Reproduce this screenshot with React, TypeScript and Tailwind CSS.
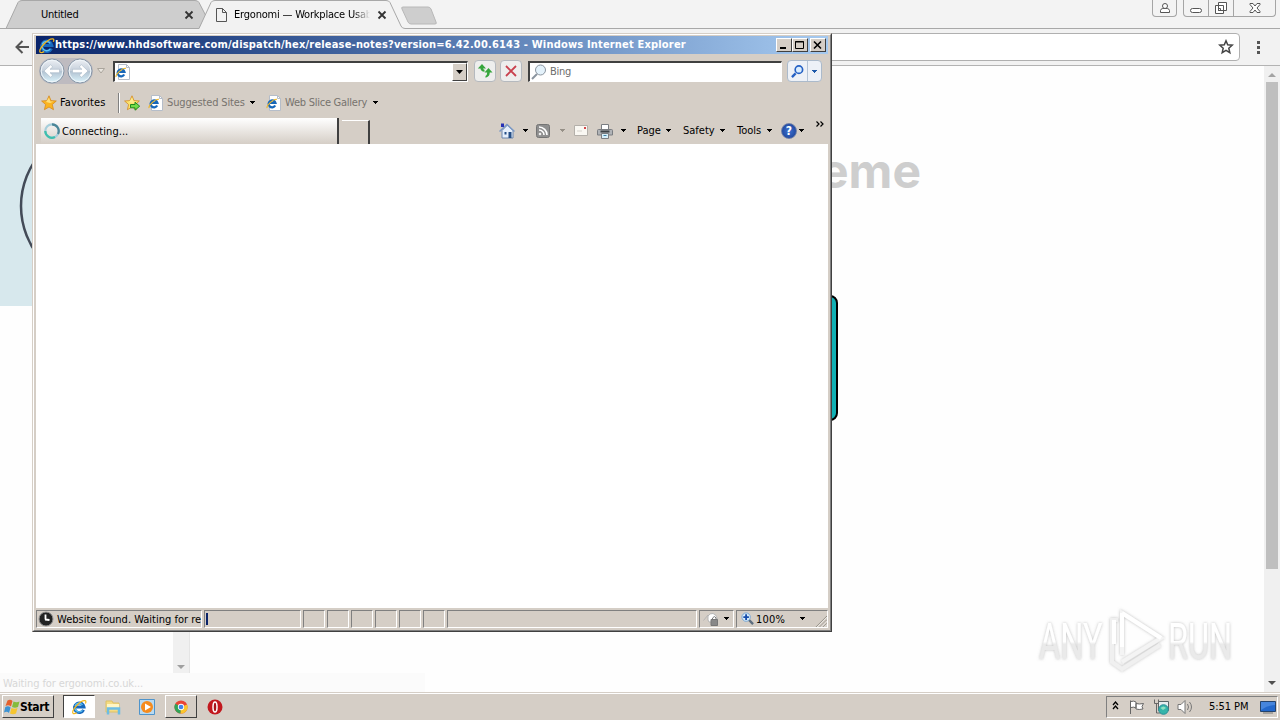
import React from "react";

const Caret = ({ className = "" }: { className?: string }) => (
  <svg viewBox="0 0 5 3" className={`h-[3px] w-[5px] shrink-0 ${className}`} shapeRendering="crispEdges">
    <path d="M0 0h5v1H0zM1 1h3v1H1zM2 2h1v1H2z" fill="currentColor" />
  </svg>
);

const IeLogo = ({ className = "" }: { className?: string }) => (
  <svg viewBox="0 0 16 16" className={`shrink-0 ${className}`} fill="none">
    <path d="M12.6 10.8A4.800 4.800 0 1 1 13 8H5" stroke="#1769bd" strokeWidth="3" />
    <path d="M11.500 11.400A4.300 4.300 0 0 1 4 9.500M4 7a4.200 4.200 0 0 1 7.500-1" stroke="#5cc3f4" strokeWidth="1.300" />
    <path d="M2 14.400C.200 11.500 9 1.200 14 1.700c1.300.2 1 1.600.4 2.800M2 14.400c1 .6 2.700 0 3.800-.6" stroke="#f4b91d" strokeWidth="1.200" />
  </svg>
);

const PageIcon = () => (
  <svg viewBox="0 0 15 16" className="h-4 w-[15px] shrink-0" fill="none">
    <path d="M3.500.5h8l3 3v12h-11z" fill="#fff" stroke="#b5bdc9" />
    <path d="M11.500.5v3h3" stroke="#b5bdc9" />
    <path d="M9.200 10.500A3.500 3.500 0 1 1 9.500 8H4" stroke="#1767b9" strokeWidth="2.200" />
    <path d="M1.200 13C0 11.500 6.500 3.800 11 4.300" stroke="#edb628" strokeWidth="1.200" />
  </svg>
);

const Star = ({ add = false }: { add?: boolean }) => (
  <svg viewBox="0 0 16 16" className="h-4 w-4 shrink-0">
    <path
      d="M8 .8l2 4.800 5.300.4-4 3.500 1.200 5.200L8 12l-4.600 2.700 1.200-5.200-4-3.500 5.300-.4z"
      fill={add ? "#fbe36c" : "#fbb41f"}
      stroke="#d58a22"
      strokeWidth=".8"
    />
    <path d="M8 2.500l1.300 4h3.500L9 8 5 7z" fill="#fff0a0" opacity=".7" />
    {add && <path d="M6.500 9.500h4.500V7.200l4.700 4-4.700 4v-2.400H6.500z" fill="#72dc48" stroke="#218a20" />}
  </svg>
);

const NavButton = ({ forward = false }: { forward?: boolean }) => (
  <svg viewBox="0 0 26 26" className="h-[26px] w-[26px] shrink-0">
    <defs>
      <linearGradient id="nav" x2="0" y2="1">
        <stop stopColor="#edf0f5" />
        <stop offset=".48" stopColor="#c6d0db" />
        <stop offset=".52" stopColor="#b3c3d2" />
        <stop offset="1" stopColor="#dcf5fd" />
      </linearGradient>
    </defs>
    <circle cx="13" cy="13" r="12" fill="url(#nav)" stroke="#8997a7" />
    <circle cx="13" cy="13" r="10.800" fill="none" stroke="#f0f6fa" />
    <g transform={forward ? "matrix(-1 0 0 1 26 0)" : undefined}>
      <path d="M5 13l6.500-6.200 2.300 2L11 11.300h9.500v3.400H11l2.800 2.500-2.300 2z" fill="#fff" stroke="#9fb0c0" strokeWidth=".5" />
    </g>
  </svg>
);

const ChromeWindowIcons = () => (
  <div className="flex h-[17px] w-[124px] shrink-0 items-start">
    <div className="mr-[6px] flex h-[17px] w-[25px] items-center justify-center rounded-b border border-t-0 border-[#a5a5a5]">
      <svg viewBox="0 0 12 12" className="mb-px h-3 w-3" fill="#fff" stroke="#555">
        <path d="M1.500 10.500V8.500q0-1.500 2.200-2h4.600q2.200.500 2.200 2v2z" />
        <circle cx="6" cy="4" r="2.500" />
      </svg>
    </div>
    <div className="flex h-[17px] w-[93px] rounded-b border border-t-0 border-[#a5a5a5]">
      <div className="flex w-[25px] items-center justify-center border-r border-[#a5a5a5]">
        <div className="mt-[5px] h-[5px] w-3 rounded-sm border border-[#555] bg-white" />
      </div>
      <div className="flex w-[25px] items-center justify-center border-r border-[#a5a5a5]">
        <svg viewBox="0 0 14 14" className="h-[14px] w-[14px]" fill="#fff" stroke="#555">
          <path d="M4.500 1.500h8v8h-8zM1.500 4.500h8v8h-8zM4.500 7.500h2v2h-2z" />
        </svg>
      </div>
      <div className="flex flex-1 items-center justify-center">
        <svg viewBox="0 0 12 12" className="mb-px h-3 w-3" fill="#fff" stroke="#555">
          <path d="M1 1.500h3L6 4l2-2.500h3v1L8 6l3 3.500v1H8L6 8l-2 2.500H1v-1L4 6 1 2.500z" />
        </svg>
      </div>
    </div>
  </div>
);

const BrowserTabs = () => (
  <div className="relative flex h-[29px] shrink-0 bg-[#f3f3f3] text-[11px] text-black">
    <svg viewBox="0 0 1280 29" className="absolute inset-0 h-[29px] w-full" fill="none">
      <path d="M6 28.500L18 2.500Q19 .5 22 .5H195Q198 .5 199 2.500L206 16 199 28.500z" fill="#cecece" stroke="#a8a8a8" />
      <path d="M0 28.500H199L211 2.500Q212 .5 215 .5H386Q389 .5 390 2.500L401 26q1 2.500 4 2.500H1280" fill="#f2f2f2" stroke="#a8a8a8" />
      <path d="M403 7h25q2 0 3 2l5 13q1 2-1 2h-24q-2 0-3-2l-6-13q-1-2 1-2z" fill="#cecece" stroke="#b8b8b8" />
    </svg>
    <div className="relative flex w-full items-center">
      <span className="ml-[41px] w-[143px] pt-px whitespace-nowrap tracking-[-0.200px]">Untitled</span>
      <svg viewBox="0 0 10 10" className="h-[10px] w-[10px]" stroke="#333" strokeWidth="1.800">
        <path d="M1.500 1.500l7 7M8.500 1.500l-7 7" />
      </svg>
      <svg viewBox="0 0 11 14" className="ml-[22px] h-[14px] w-[11px]" fill="none" stroke="#555">
        <path d="M.5.500h6l4 4v9H.500zM6.500.500v4h4" />
      </svg>
      <span className="ml-[7px] w-[136px] pt-px whitespace-nowrap tracking-[-0.200px] [mask-image:linear-gradient(to_right,black_88%,transparent)]">
        Ergonomi — Workplace Usab
      </span>
      <svg viewBox="0 0 10 10" className="ml-[7px] h-[10px] w-[10px]" stroke="#333" strokeWidth="1.800">
        <path d="M1.500 1.500l7 7M8.500 1.500l-7 7" />
      </svg>
      <div className="ml-auto self-start pr-[4px]">
        <ChromeWindowIcons />
      </div>
    </div>
  </div>
);

const BrowserToolbar = () => (
  <div className="flex h-[37px] shrink-0 items-center border-b border-[#b3b3b3] bg-[#f2f2f2]">
    <svg viewBox="0 0 14 14" className="ml-[15px] h-[14px] w-[14px]" fill="none" stroke="#555" strokeWidth="2">
      <path d="M14 7H2M7.500 1L1.500 7l6 6" />
    </svg>
    <div className="ml-[11px] flex h-[28px] w-[1200px] items-center justify-end rounded-sm border border-[#b0b0b0] bg-white pr-[5px]">
      <svg viewBox="0 0 16 16" className="h-4 w-4" fill="none" stroke="#444" strokeWidth="1.500">
        <path d="M8 1.800l1.700 4 4.500.400-3.400 3 1 4.400L8 11.300l-3.800 2.300 1-4.400-3.400-3 4.500-.4z" />
      </svg>
    </div>
    <svg viewBox="0 0 3 13" className="ml-[17px] h-[13px] w-[3px]" fill="#555">
      <path d="M0 0h3v3H0zM0 5h3v3H0zM0 10h3v3H0z" />
    </svg>
  </div>
);

const AnyRunMark = () => (
  <svg viewBox="0 0 220 70" className="absolute right-[32px] bottom-[16px] h-[70px] w-[220px]">
    <defs>
      <linearGradient id="mark" x2="0" y2="1">
        <stop offset=".5" stopColor="#fff" />
        <stop offset=".54" stopColor="#eaeaea" />
      </linearGradient>
      <filter id="soft" x="-10%" y="-20%" width="120%" height="140%">
        <feDropShadow dx="0" dy="0" stdDeviation="1.600" floodColor="#888" floodOpacity=".55" />
      </filter>
    </defs>
    <g filter="url(#soft)" fill="url(#mark)" fontFamily="Roboto, sans-serif" fontSize="50" fontWeight="400">
      <text transform="translate(11 53) scale(.65 1)">ANY</text>
      <text transform="translate(140 53) scale(.65 1)">RUN</text>
      <g fill="none" strokeWidth="4">
        <path d="M94 49V7l39 25-39 24" stroke="#f4f4f4" />
        <path d="M94 7l39 25M94 7v34" stroke="#fff" />
        <path d="M90 14h-6v42l10 7 38-24" stroke="#f0f0f0" />
        <path d="M86 14v24" stroke="#fff" />
      </g>
    </g>
  </svg>
);

const BrowserPage = () => (
  <div className="relative flex min-h-0 flex-1 overflow-hidden bg-[#fefefe]">
    <div className="mt-[40px] h-[200px] w-[200px] shrink-0 overflow-hidden bg-[#d7e8ed]">
      <svg viewBox="0 0 200 200" className="h-full w-full">
        <circle cx="101" cy="100" r="80" fill="none" stroke="#434b58" strokeWidth="2.500" />
      </svg>
    </div>
    <div className="flex flex-1 flex-col">
      <h1 className="mt-[76px] w-[721px] text-right font-['Inter',sans-serif] text-[48px] leading-[58px] font-bold text-[#cecece]">
        eme
      </h1>
      <div className="mt-[95px] ml-[538px] h-[126px] w-[100px] rounded-[8px] border-2 border-black bg-[#11b0b5]" />
    </div>
    <div className="flex w-4 shrink-0 flex-col items-center bg-[#f0f0f0]">
      <svg viewBox="0 0 8 4" className="mt-[7px] h-1 w-2" fill="#a3a3a3"><path d="M4 0l4 4H0z" /></svg>
      <div className="mt-[5px] h-[487px] w-[12px] bg-[#bfbfbf]" />
      <svg viewBox="0 0 8 4" className="mt-auto mb-[7px] h-1 w-2" fill="#505050"><path d="M4 4l4-4H0z" /></svg>
    </div>
    <div className="absolute bottom-[19px] left-[173px] flex h-[60px] w-[17px] items-end justify-center border-r border-[#e5e5e5] bg-[#f0f0f0] pb-1">
      <svg viewBox="0 0 8 4" className="h-1 w-2" fill="#a0a0a0"><path d="M4 4l4-4H0z" /></svg>
    </div>
    <div className="absolute bottom-0 left-0 flex h-[19px] w-[425px] items-center bg-[#fbfbfb] pt-[3px] pl-[3px] text-[11px] tracking-[-0.100px] text-[#d7d7d7]">
      Waiting for ergonomi.co.uk...
    </div>
    <AnyRunMark />
  </div>
);

const TitleButton = ({ className = "", children }: { className?: string; children: React.ReactNode }) => (
  <button
    className={`flex h-[14px] w-4 items-center justify-center border border-t-white border-r-[#404040] border-b-[#404040] border-l-white bg-[#d5cec6] ${className}`}
  >
    <svg viewBox="0 0 12 10" className="h-[10px] w-3 shrink-0" fill="none" stroke="#000">
      {children}
    </svg>
  </button>
);

const TitleBar = () => (
  <div className="flex h-[18px] shrink-0 items-center bg-linear-to-r from-[#0a246a] to-[#a6caf0] pr-[2px]">
    <IeLogo className="ml-[2px] h-[17px] w-[17px]" />
    <span className="w-[650px] whitespace-nowrap text-[11px] leading-[18px] font-bold tracking-[0.180px] text-white">
      https://www.hhdsoftware.com/dispatch/hex/release-notes?version=6.42.00.6143 - Windows Internet Explorer
    </span>
    <TitleButton className="ml-auto">
      <path d="M2 8h6" strokeWidth="2" />
    </TitleButton>
    <TitleButton>
      <path d="M1.500 1.500h8v7h-8zM1 2h9" />
    </TitleButton>
    <TitleButton className="ml-[2px]">
      <path d="M2 1.500l7 7M9 1.500l-7 7" strokeWidth="1.600" />
    </TitleButton>
  </div>
);

const AddressRow = () => (
  <div className="flex h-[34px] shrink-0 items-center">
    <div className="ml-[3px] flex w-[54px] gap-[2px] rounded-full bg-[#bebbc0]">
      <NavButton />
      <NavButton forward />
    </div>
    <svg viewBox="0 0 8 6" className="ml-1 h-[6px] w-2" fill="#e9e5df" stroke="#aaa59d"><path d="M.5.500h7L4 5z" /></svg>
    <div className="ml-[8px] flex h-[21px] w-[355px] items-center border-t-2 border-r border-b border-l-2 border-t-[#404040] border-r-white border-b-white border-l-[#404040] bg-white">
      <PageIcon />
      <div className="ml-auto flex h-[18px] w-[15px] items-center justify-center border border-t-white border-r-[#404040] border-b-[#404040] border-l-white bg-[#d5cec6]">
        <svg viewBox="0 0 7 4" className="h-1 w-[7px]"><path d="M0 0h7L3.500 4z" /></svg>
      </div>
    </div>
    <button className="ml-[6px] flex h-[22px] w-[22px] items-center justify-center rounded-sm border border-[#b5b9be] bg-[#eeeeed]">
      <svg viewBox="0 0 16 16" className="h-4 w-4 shrink-0" fill="#36a63c">
        <path d="M5 1L.8 5.500h2.700q.200 3 4 3.200v-2q-1.500-.2-1.500-1.200h3z" />
        <path d="M11.500 5L7.500 9.500h2.700q0 2.500-1.700 3.500v1.700q4-.7 4.300-5.200h2.700z" />
      </svg>
    </button>
    <button className="ml-[4px] flex h-[22px] w-[22px] items-center justify-center rounded-sm border border-[#b5b9be] bg-[#eeeeed]">
      <svg viewBox="0 0 12 12" className="h-3 w-3" stroke="#c9414e" strokeWidth="1.800">
        <path d="M1 1l10 10M11 1L1 11" />
      </svg>
    </button>
    <div className="ml-[6px] flex h-[21px] w-[254px] items-center border-t-2 border-r border-b border-l-2 border-t-[#404040] border-r-white border-b-white border-l-[#404040] bg-white text-[11px] text-[#6d6d6d]">
      <svg viewBox="0 0 16 16" className="mr-[3px] ml-px h-4 w-4" fill="none" stroke="#8a949f">
        <path d="M6 10L1 15" strokeWidth="2" />
        <circle cx="9.500" cy="6" r="5" fill="#e4f2fb" />
      </svg>
      <span className="pt-[2px] tracking-[-0.300px]">Bing</span>
    </div>
    <div className="ml-[5px] flex h-[22px] w-[35px] items-center rounded-sm border border-[#abbacb] bg-[#edf1f7]">
      <div className="flex h-full w-[20px] items-center justify-center border-r border-[#b5c4d6]">
        <svg viewBox="0 0 14 14" className="h-[13px] w-[13px]" fill="none" stroke="#2561c4">
          <path d="M5 9l-4 4" strokeWidth="2.500" />
          <circle cx="8.500" cy="5" r="4" strokeWidth="1.800" fill="#d9edff" />
        </svg>
      </div>
      <Caret className="ml-[4px] text-[#1f5aaa]" />
    </div>
  </div>
);

const FavoritesRow = () => (
  <div className="flex h-[29px] shrink-0 items-center text-[11px] text-[#77736e]">
    <span className="ml-[5px]"><Star /></span>
    <span className="ml-[3px] w-[52px] pt-[2px] whitespace-nowrap tracking-[0.100px] text-black">Favorites</span>
    <div className="ml-[6px] h-[20px] w-[2px] border-r border-l border-r-white border-l-[#808080]" />
    <span className="ml-[4px]"><Star add /></span>
    <span className="ml-[8px]"><PageIcon /></span>
    <span className="ml-[4px] w-[83px] pt-[2px] whitespace-nowrap tracking-[-0.150px]">Suggested Sites</span>
    <Caret className="text-black" />
    <span className="ml-[11px]"><PageIcon /></span>
    <span className="ml-[4px] w-[88px] pt-[2px] whitespace-nowrap tracking-[-0.250px]">Web Slice Gallery</span>
    <Caret className="text-black" />
  </div>
);

const CommandBar = () => (
  <div className="flex h-[27px] flex-1 items-center text-[11px] text-black">
    <svg viewBox="0 0 16 16" className="ml-[129px] h-4 w-4 shrink-0" fill="none">
      <path d="M3 7.500v7.500h11V7.500L8.500 2z" fill="#e6effb" stroke="#6c86ad" />
      <path d="M.500 8.500L8 1.500l7.500 7" stroke="#7b98c4" strokeWidth="1.500" />
      <path d="M2 .5h3V4H2z" fill="#2630b5" />
      <path d="M9.500 9h3v6h-3zM5.500 9h2v2.500h-2z" fill="#254e86" />
    </svg>
    <Caret className="ml-[8px]" />
    <svg viewBox="0 0 14 14" className="ml-[8px] h-[14px] w-[14px] shrink-0" fill="none" stroke="#fff" strokeWidth="1.600">
      <rect x=".5" y=".5" width="13" height="13" rx="2" fill="#8f8f8f" stroke="#747474" strokeWidth="1" />
      <path d="M3 6a5 5 0 0 1 5 5M3 3a8 8 0 0 1 8 8" />
      <circle cx="4" cy="10" r="1" fill="#fff" strokeWidth=".5" />
    </svg>
    <Caret className="ml-[10px] text-[#969087]" />
    <svg viewBox="0 0 14 11" className="ml-[9px] h-[11px] w-[14px] shrink-0" fill="#faf8f3" stroke="#b4b0aa">
      <path d="M.5.500h13v10H.500z" />
      <path d="M3 6h5" stroke="#d5d2cc" />
      <path d="M10 2h2v2h-2z" fill="#d34649" stroke="none" />
    </svg>
    <svg viewBox="0 0 16 16" className="ml-[9px] h-4 w-4 shrink-0" fill="#fff" stroke="#7a7d81">
      <path d="M4.500 1.500h7v5h-7z" />
      <path d="M1.500 6.500h13q1 0 1 1V12H.500V7.500q0-1 1-1z" fill="#b0b3b7" />
      <path d="M3.500 8.500h9" stroke="#3c4247" strokeWidth="2" />
      <path d="M4.500 10.500h7v5h-7z" fill="#d8effa" />
      <path d="M6.500 12.500h3" stroke="#3c81a4" />
    </svg>
    <Caret className="ml-[8px]" />
    <span className="ml-[11px] w-[29px] pt-px">Page</span>
    <Caret />
    <span className="ml-[12px] w-[37px] pt-px">Safety</span>
    <Caret />
    <span className="ml-[12px] w-[30px] pt-px">Tools</span>
    <Caret />
    <div className="ml-[9px] flex h-4 w-4 shrink-0 items-center justify-center rounded-full border border-[#7080a8] bg-radial from-[#3f73d2] to-[#183b90] text-[12px] leading-none font-bold text-white">
      ?
    </div>
    <Caret className="ml-[2px]" />
    <svg viewBox="0 0 8 6" className="mb-[14px] ml-[12px] h-[6px] w-2 shrink-0" fill="none" stroke="#000" strokeWidth="1.200">
      <path d="M.500.500L3 3 .500 5.500M4.500.500L7 3 4.500 5.500" />
    </svg>
  </div>
);

const IeTabs = () => (
  <div className="flex h-[27px] shrink-0 items-end">
    <div className="ml-[5px] flex h-[26px] w-[298px] shrink-0 items-center border-r-2 border-r-[#404040] bg-linear-to-b from-white to-[#d5cec6] pl-[3px] text-[11px] text-black">
      <svg viewBox="0 0 16 16" className="mr-[2px] h-4 w-4" fill="none" strokeWidth="2.200">
        <circle cx="8" cy="8" r="6.700" stroke="#a6cedb" />
        <path d="M8 1.300A6.700 6.700 0 0 1 14 11" stroke="#4c8698" />
        <path d="M1.300 8A6.700 6.700 0 0 0 11 14" stroke="#3fbfae" />
      </svg>
      <span className="pt-[3px] tracking-[0.050px]">Connecting...</span>
    </div>
    <div className="ml-[3px] h-[24px] w-[28px] shrink-0 border-t border-r-2 border-t-white border-r-[#404040] bg-[#d5cec6]" />
    <CommandBar />
  </div>
);

const StatusCell = ({ className = "", children }: { className?: string; children?: React.ReactNode }) => (
  <div className={`flex h-[18px] shrink-0 items-center border border-t-[#808080] border-r-white border-b-white border-l-[#808080] whitespace-nowrap ${className}`}>
    {children}
  </div>
);

const IeStatusBar = () => (
  <div className="flex h-[21px] shrink-0 items-center gap-[2px] text-[11px] text-black">
    <StatusCell className="w-[166px]">
      <svg viewBox="0 0 16 16" className="mx-[1px] h-4 w-4 shrink-0">
        <circle cx="8" cy="8" r="7" fill="#222" stroke="#929292" />
        <path d="M7.500 8.500V3.500M7 8.500l4.500.500" fill="none" stroke="#fff" strokeWidth="1.800" />
      </svg>
      <span className="ml-[2px] w-[144px] pt-[3px]">Website found. Waiting for re</span>
    </StatusCell>
    <StatusCell className="w-[97px]">
      <div className="ml-px h-[12px] w-[2px] bg-[#0a246a]" />
    </StatusCell>
    {[0, 1, 2, 3, 4, 5].map((pane) => (
      <StatusCell key={pane} className="w-[22px]" />
    ))}
    <StatusCell className="w-[250px]" />
    <StatusCell className="w-[35px]">
      <svg viewBox="0 0 16 14" className="ml-[3px] h-[14px] w-4" fill="#fff" stroke="#b5b5b5">
        <path d="M5 8V4q2-3 5-2.500T14 6v4H6z" />
        <path d="M.500 8.500L5 3" />
        <path d="M8 7.500h6.500v6H8z" fill="#888" stroke="#777" />
        <path d="M9.500 7.500V6q2-3 3.500 0v1.500" fill="none" stroke="#777" />
      </svg>
      <Caret className="ml-[5px]" />
    </StatusCell>
    <StatusCell className="w-[92px]">
      <svg viewBox="0 0 14 14" className="ml-[4px] h-[13px] w-[13px]" fill="#dceefa" stroke="#6fa3d6">
        <path d="M8.500 8.500L13 13" stroke="#5c6d7e" strokeWidth="2.500" />
        <circle cx="5.500" cy="5.500" r="4.500" />
        <path d="M2.500 5.500h6M5.500 2.500v6" stroke="#164dac" strokeWidth="2" />
      </svg>
      <span className="ml-[2px] w-[44px] pt-[3px] tracking-[0.200px]">100%</span>
      <Caret />
      <svg viewBox="0 0 13 13" className="mt-[4px] ml-auto h-3 w-3" stroke="#888278">
        <path d="M1 13L13 1M5 13l8-8M9 13l4-4" />
        <path d="M2 13L13 2M6 13l7-7M10 13l3-3" stroke="#fff" strokeWidth=".6" />
      </svg>
    </StatusCell>
  </div>
);

const ExplorerWindow = () => (
  <div className="absolute top-[33px] left-[32px] flex h-[599px] w-[800px] border border-t-[#d5cec6] border-r-[#404040] border-b-[#404040] border-l-[#d5cec6] bg-[#d5cec6]">
    <div className="flex min-w-0 flex-1 flex-col border border-t-white border-r-[#808080] border-b-[#808080] border-l-white px-[2px] pt-px pb-px">
      <TitleBar />
      <AddressRow />
      <FavoritesRow />
      <IeTabs />
      <div className="flex-1 bg-white" />
      <IeStatusBar />
    </div>
  </div>
);

const Taskbar = () => (
  <div className="flex h-[28px] shrink-0 items-center border-t border-[#d5cec6] bg-[#d5cec6] text-[11px] text-black shadow-[inset_0_1px_0_#fff]">
    <button className="ml-[2px] flex h-[23px] w-[52px] items-center border border-t-white border-r-[#404040] border-b-[#404040] border-l-white text-[12px] font-bold tracking-[-0.350px]">
      <svg viewBox="0 0 16 16" className="ml-px h-4 w-4 shrink-0">
        <path d="M3.500 1.500q3-1.500 5 .5L7 7.500q-2.500-2-5.500-.5z" fill="#e4602c" />
        <path d="M9.500 2.500q3 1.500 6 0L14 8q-3 1.500-6 0z" fill="#85bb3c" />
        <path d="M1.300 8q3-1.500 5.300.5L5 14q-2-2-5-.5z" fill="#3d93d3" />
        <path d="M7.500 9q3 1.500 6 0L12 14.500q-3 1.500-6 0z" fill="#f6c52f" />
      </svg>
      <span className="pt-px">Start</span>
    </button>
    <div className="ml-[9px] flex h-[23px] w-[32px] items-center justify-center border border-t-[#404040] border-r-white border-b-white border-l-[#404040] bg-white">
      <IeLogo className="h-4 w-4" />
    </div>
    <svg viewBox="0 0 16 16" className="ml-[10px] h-4 w-4">
      <path d="M1 2h6l1 2h6v9H1z" fill="#f5dc83" stroke="#dcc067" />
      <path d="M2 5h12v4H2z" fill="#fff6c4" />
      <path d="M3 15.500V9.500h11v6" fill="none" stroke="#6cbde4" strokeWidth="2.500" />
    </svg>
    <svg viewBox="0 0 16 16" className="ml-[18px] h-4 w-4">
      <path d="M.5.500h15v15H.500z" fill="#b9daf1" stroke="#4f94cb" />
      <circle cx="8" cy="8" r="6" fill="#f58b1e" />
      <path d="M6 4.500l6 3.500-6 3.500z" fill="#fff" />
    </svg>
    <div className="ml-[10px] flex h-[23px] w-[32px] items-center justify-center border border-t-white border-r-[#404040] border-b-[#404040] border-l-white">
      <svg viewBox="0 0 16 16" className="h-[14px] w-[14px]">
        <circle cx="8" cy="8" r="7.500" fill="#e94435" />
        <path d="M8 8L1.500 4.200A7.500 7.500 0 0 0 7.500 15.500z" fill="#31a457" />
        <path d="M8 8L7.500 15.500A7.500 7.500 0 0 0 15 5z" fill="#fbc62d" />
        <circle cx="8" cy="8" r="3.600" fill="#fff" />
        <circle cx="8" cy="8" r="2.700" fill="#4383ea" />
      </svg>
    </div>
    <svg viewBox="0 0 16 16" className="ml-[10px] h-4 w-4">
      <circle cx="8" cy="8" r="7.500" fill="#c2181e" />
      <ellipse cx="8" cy="8" rx="2" ry="5" fill="#a91419" stroke="#fff" strokeWidth="1.500" />
    </svg>
    <div className="mr-[2px] ml-auto flex h-[22px] w-[172px] items-center border border-t-[#808080] border-r-white border-b-white border-l-[#808080]">
      <svg viewBox="0 0 7 9" className="mb-[2px] ml-[5px] h-[9px] w-[7px]" fill="none" stroke="#000" strokeWidth="1.300">
        <path d="M1 4l2.500-3L6 4M1 8l2.500-3L6 8" />
      </svg>
      <svg viewBox="0 0 16 16" className="ml-[10px] h-4 w-4" fill="#fff" stroke="#666">
        <path d="M1.500 15V1.500M2 2.500q3-1 5 .500v6q-2-1.500-5-.500M7 4.500q3 1 7.500 0l-1.500 3 1 2.500q-4 1-7 0z" />
      </svg>
      <svg viewBox="0 0 16 16" className="ml-[8px] h-4 w-4" fill="#e7edef" stroke="#5b6568">
        <path d="M5.500 2.500h10v9h-10z" />
        <path d="M1.500.500v4h4v-4M3.500 5v9h4" fill="none" stroke="#666" />
        <circle cx="10.500" cy="10.500" r="4.800" fill="#35b5aa" stroke="#2a8f98" />
        <path d="M7.500 9q3-3 5.500 0l-3 2z" fill="#8fe0c0" stroke="none" />
      </svg>
      <svg viewBox="0 0 17 16" className="ml-[8px] h-4 w-[17px]" fill="none" stroke="#777">
        <path d="M1 5.500h3l4-4v13l-4-4H1z" fill="#fff" />
        <path d="M10.500 5q2 3 0 6M12.500 3q4 5 0 10" />
      </svg>
      <span className="ml-[15px] w-[50px] pt-[2px] whitespace-nowrap tracking-[-0.050px]">5:51 PM</span>
      <svg viewBox="0 0 16 14" className="ml-px h-[14px] w-4 shrink-0">
        <path d="M.500 1.500h15v10H.500z" fill="#2368cb" stroke="#24436c" />
        <path d="M1 2h14v3Q8 5 1 10z" fill="#4685dc" />
        <path d="M3 13h10" stroke="#777" />
      </svg>
    </div>
  </div>
);

const App = () => {
  return (
    <div className="relative flex h-[720px] w-[1280px] flex-col overflow-hidden font-['DejaVu_Sans_Condensed','DejaVu_Sans',sans-serif]">
      <BrowserTabs />
      <BrowserToolbar />
      <BrowserPage />
      <Taskbar />
      <ExplorerWindow />
    </div>
  );
};

export default App;
